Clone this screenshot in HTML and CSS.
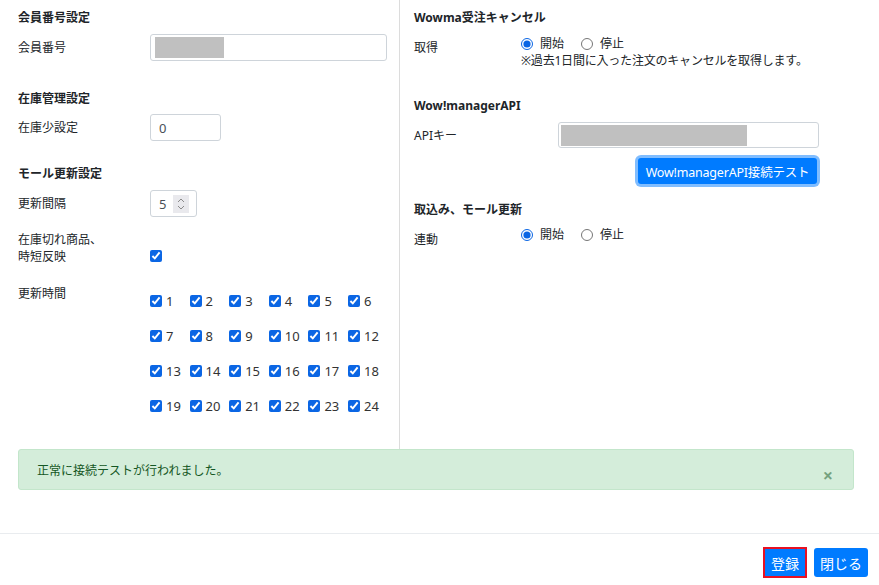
FILE: index.html
```html
<!DOCTYPE html>
<html lang="ja">
<head>
    <meta charset="UTF-8">
    <title>設定</title>
    <link rel="stylesheet" href="styles.css">
</head>
<body>
    <div class="modal-body">
        <div class="col col-left">
            <h3 class="sec-title">会員番号設定</h3>
            <div class="row row-member">
                <span class="lbl">会員番号</span>
                <div class="field field-member"><span class="mask" style="width:69px"></span></div>
            </div>

            <h3 class="sec-title t-stock">在庫管理設定</h3>
            <div class="row row-stock">
                <span class="lbl">在庫少設定</span>
                <div class="field field-stock">0</div>
            </div>

            <h3 class="sec-title t-mall">モール更新設定</h3>
            <div class="row row-interval">
                <span class="lbl">更新間隔</span>
                <div class="field field-num">
                    5
                    <span class="spin">
                        <svg width="8" height="14" viewBox="0 0 8 14"><path d="M1 5 L4 2 L7 5 M1 9 L4 12 L7 9" fill="none" stroke="#8a8a8a" stroke-width="1"/></svg>
                    </span>
                </div>
            </div>
            <div class="row row-soldout">
                <span class="lbl">在庫切れ商品、<br>時短反映</span>
                <input type="checkbox" class="chk chk-soldout" checked>
            </div>
            <div class="row row-hours">
                <span class="lbl lbl-hours">更新時間</span>
                <div class="hours" id="hours"></div>
            </div>
        </div>

        <div class="col col-right">
            <h3 class="sec-title">Wowma受注キャンセル</h3>
            <div class="row row-get">
                <span class="lbl lbl-radio">取得</span>
                <div>
                    <div class="radios">
                        <label class="radio"><input type="radio" name="get" checked>開始</label>
                        <label class="radio"><input type="radio" name="get">停止</label>
                    </div>
                    <div class="note">※過去1日間に入った注文のキャンセルを取得します。</div>
                </div>
            </div>

            <h3 class="sec-title t-api">Wow!managerAPI</h3>
            <div class="row row-api">
                <span class="lbl lbl-api">APIキー</span>
                <div class="api-box">
                    <div class="field field-api"><span class="mask" style="width:186px"></span></div>
                    <button class="btn btn-test">Wow!managerAPI接続テスト</button>
                </div>
            </div>

            <h3 class="sec-title t-sync">取込み、モール更新</h3>
            <div class="row row-sync">
                <span class="lbl lbl-radio lbl-sync">連動</span>
                <div class="radios">
                    <label class="radio"><input type="radio" name="sync" checked>開始</label>
                    <label class="radio"><input type="radio" name="sync">停止</label>
                </div>
            </div>
        </div>
    </div>

    <div class="alert">
        <span>正常に接続テストが行われました。</span>
        <span class="close">×</span>
    </div>

    <div class="modal-footer">
        <button class="btn btn-save">登録</button>
        <button class="btn btn-close">閉じる</button>
    </div>

    <script>
        var hours = document.getElementById('hours');
        for (var i = 1; i <= 24; i++) {
            hours.innerHTML += '<label class="hour"><input type="checkbox" class="chk" checked>' + i + '</label>';
        }
    </script>
</body>
</html>
```

FILE: styles.css
```css
body {
    margin: 0;
    font-family: "Noto Sans", "Noto Sans CJK JP", sans-serif;
    font-size: 12px;
    color: #212529;
    background-color: #fff;
}

.modal-body {
    display: grid;
    grid-template-columns: 400px 1fr;
    height: 449px;
}

.col {
    padding-top: 8px;
}

.col-left {
    padding-left: 18px;
    border-right: 1px solid #dcdcdc;
}

.col-right {
    padding-left: 14px;
}

.sec-title {
    margin: 0;
    font-size: 12px;
    font-weight: bold;
    line-height: 20px;
}

.t-stock { margin-top: 28px; }
.t-mall { margin-top: 23px; }
.t-api { margin-top: 27px; }
.t-sync { margin-top: 16px; }

.row {
    display: flex;
    align-items: center;
}

.lbl {
    width: 132px;
    flex-shrink: 0;
    line-height: 17px;
}

.row-member { margin-top: 6px; }
.row-stock { margin-top: 5px; }
.row-interval { margin-top: 6px; }

.row-soldout {
    margin-top: 14px;
    align-items: flex-start;
}

.row-hours {
    margin-top: 18px;
    align-items: flex-start;
}

.lbl-hours {
    padding-top: 2px;
}

.field {
    box-sizing: border-box;
    height: 27px;
    border: 1px solid #ced4da;
    border-radius: 3px;
    background-color: #fff;
    padding: 3px 4px;
    display: flex;
    align-items: center;
    font-size: 13px;
    color: #495057;
}

.field-member { width: 237px; }

.field-stock {
    width: 71px;
    padding-left: 8px;
}

.field-num {
    width: 47px;
    padding-left: 8px;
    gap: 7px;
}

.spin {
    width: 16px;
    height: 18px;
    background-color: #e9e9ed;
    display: flex;
    align-items: center;
    justify-content: center;
}

.mask {
    display: block;
    height: 21px;
    background-color: #c0c0c0;
}

.field-api {
    width: 261px;
    height: 26px;
    padding: 2px;
}

.chk {
    margin: 0;
    width: 12px;
    height: 12px;
    accent-color: #0b66e4;
}

.row-soldout .chk-soldout {
    margin-top: 19px;
}

.hours {
    display: grid;
    grid-template-columns: repeat(6, 39.6px);
    grid-auto-rows: 35px;
}

.hour {
    display: flex;
    align-items: center;
    gap: 4px;
    font-size: 13px;
    color: #333;
}

.row-get {
    margin-top: 7px;
    align-items: flex-start;
}

.lbl-radio {
    width: 107px;
    padding-top: 4px;
}

.radios {
    display: flex;
    gap: 17px;
    line-height: 17px;
}

.radio {
    display: flex;
    align-items: center;
    gap: 7px;
}

.radio input {
    margin: 0;
    width: 12px;
    height: 12px;
    accent-color: #0b66e4;
}

.note {
    line-height: 17px;
    letter-spacing: -0.2px;
}

.row-api {
    margin-top: 6px;
    align-items: flex-start;
}

.lbl-api {
    width: 144px;
    padding-top: 5px;
}

.api-box {
    display: flex;
    flex-direction: column;
    align-items: flex-end;
    width: 261px;
}

.btn {
    font-family: "Noto Sans", "Noto Sans CJK JP", sans-serif;
    border: none;
    border-radius: 3px;
    background-color: #007bff;
    color: #fff;
    cursor: pointer;
}

.btn-test {
    margin-top: 10px;
    margin-right: 2px;
    width: 179px;
    height: 26px;
    padding: 0;
    font-size: 12.5px;
    letter-spacing: -0.2px;
    box-shadow: 0 0 0 3px #80bdff;
}

.row-sync {
    margin-top: 6px;
    align-items: flex-start;
}

.lbl-sync {
    padding-top: 5px;
}

.alert {
    margin: 0 25px 0 18px;
    height: 41px;
    box-sizing: border-box;
    padding: 0 20px 0 18px;
    background-color: #d4edda;
    border: 1px solid #c3e6cb;
    border-radius: 3px;
    color: #155724;
    display: flex;
    align-items: center;
    justify-content: space-between;
}

.close {
    font-size: 18px;
    font-weight: bold;
    color: rgba(21, 87, 36, 0.5);
    margin-top: 10px;
}

.modal-footer {
    margin-top: 43px;
    border-top: 1px solid #e9ecef;
    display: flex;
    justify-content: flex-end;
    align-items: center;
    gap: 7px;
    padding: 13px 11px 0 0;
}

.btn-save,
.btn-close {
    font-size: 14px;
    height: 29px;
    padding: 0 6px;
}

.btn-save {
    height: 31px;
    border: 2px solid #e81123;
    border-radius: 0;
}
```
